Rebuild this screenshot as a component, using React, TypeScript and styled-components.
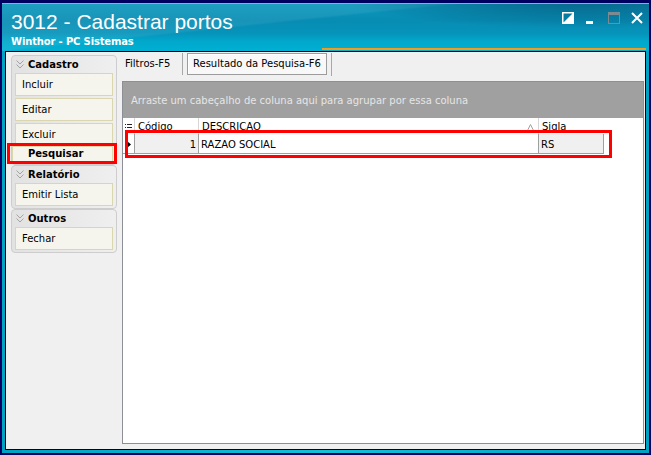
import { createGlobalStyle, styled } from "styled-components";

const GlobalStyle = createGlobalStyle`
  html, body {
    margin: 0;
    padding: 0;
    background: #000060;
  }
  body {
    font-family: "DejaVu Sans", Tahoma, sans-serif;
    font-size: 10px;
    color: #000;
  }
  *, *::before, *::after {
    box-sizing: border-box;
  }
`;

const Window = styled.div`
  width: 651px;
  height: 455px;
  display: flex;
  flex-direction: column;
  border: 2px solid #000060;
  border-top-width: 3px;
  background: linear-gradient(90deg, #00a2c4, #12c0d8 50%, #00a2c4);
`;

const TitleBar = styled.div`
  height: 48px;
  flex-shrink: 0;
  display: flex;
  justify-content: space-between;
  padding: 6px 6px 0 9px;
  border-top: 1px solid #46cfe3;
  color: #fff;
  background:
    linear-gradient(#f59b1c, #f59b1c) right 3px bottom 1px / 324px 2px no-repeat,
    radial-gradient(ellipse 55% 95% at 90% -15%, rgba(0, 55, 90, 0.6), rgba(0, 55, 90, 0) 70%),
    linear-gradient(174deg, rgba(255, 255, 255, 0.07) 0 40%, rgba(255, 255, 255, 0) 42%),
    linear-gradient(180deg, #0c98bd 0%, #078cb3 35%, #0693ba 62%, #00a8cc 80%, #00b0d2 100%);
`;

const TitleBlock = styled.div`
  display: flex;
  flex-direction: column;
`;

const Title = styled.div`
  font-family: "Liberation Sans", Arial, sans-serif;
  font-size: 21px;
  line-height: 24px;
`;

const Subtitle = styled.div`
  margin-top: 1px;
  font-weight: bold;
  font-size: 10px;
  line-height: 13px;
  letter-spacing: -0.15px;
`;

const Controls = styled.div`
  margin-top: 2px;
  display: flex;
  gap: 11px;
  height: 12px;
`;

const Content = styled.div`
  flex: 1;
  margin: 0 3px 3px;
  border: 1px solid #000;
  background: #f0f0f0;
  display: flex;
  min-height: 0;
`;

const Sidebar = styled.div`
  width: 116px;
  flex-shrink: 0;
  padding: 3px 0 0 5px;
  display: flex;
  flex-direction: column;
`;

const Group = styled.div`
  width: 106px;
  flex-shrink: 0;
  border: 1px solid #cdcdcd;
  border-radius: 4px;
  background: linear-gradient(90deg, #e2e2e2, #efefef);
  padding: 0 3px 2px;
  display: flex;
  flex-direction: column;
`;

const GroupHeader = styled.div`
  height: 17px;
  flex-shrink: 0;
  padding: 0 0 1px 1px;
  display: flex;
  align-items: center;
  gap: 4px;
  font-weight: bold;
`;

const ButtonList = styled.div`
  display: flex;
  flex-direction: column;
  gap: 2px;
`;

const ActionButton = styled.div<{ $active?: boolean }>`
  position: relative;
  flex-shrink: 0;
  height: ${(p) => (p.$active ? "16px" : "23px")};
  margin: ${(p) => (p.$active ? "-2px 0 0 -3px" : "0")};
  padding-left: ${(p) => (p.$active ? "15px" : "6px")};
  border: 1px solid #dad6ae;
  background: #f6f5ed;
  line-height: ${(p) => (p.$active ? "14px" : "21px")};
  font-weight: ${(p) => (p.$active ? "bold" : "normal")};

  ${(p) =>
    p.$active &&
    `
    &::after {
      content: "";
      position: absolute;
      top: -4px;
      left: -6px;
      right: -5px;
      bottom: -3px;
      border: 3px solid #ff0000;
    }
  `}
`;

const Main = styled.div`
  flex: 1;
  min-width: 0;
  display: flex;
  flex-direction: column;
  padding: 0 1px 5px 0;
`;

const TabStrip = styled.div`
  height: 24px;
  flex-shrink: 0;
  display: flex;
  padding-top: 1px;
`;

const Tab = styled.div`
  width: 61px;
  height: 22px;
  padding-left: 3px;
  border-right: 1px solid #a8a8a8;
  line-height: 22px;
`;

const ActiveTabSlot = styled.div`
  padding: 0 4px;
  border-right: 1px solid #a8a8a8;
`;

const ActiveTab = styled.div`
  height: 22px;
  padding: 0 5px;
  border: 1px solid #9c9c9c;
  box-shadow: inset 1px 1px 0 #ffffff;
  background: #f8f8f8;
  line-height: 20px;
`;

const GridPanel = styled.div`
  position: relative;
  flex: 1;
  margin-top: 5px;
  border: 1px solid #8d8f96;
  background: #fff;
  display: flex;
  flex-direction: column;
`;

const GroupByBand = styled.div`
  height: 36px;
  padding-left: 8px;
  background: #a0a0a0;
  color: #e6e6e6;
  line-height: 37px;
`;

const columns = "12px 64px 340px 65px 1fr";

const HeaderRow = styled.div`
  display: grid;
  grid-template-columns: ${columns};
  height: 16px;
`;

const HeaderCell = styled.div<{ $last?: boolean }>`
  display: flex;
  align-items: center;
  justify-content: space-between;
  padding: 1px 4px 0 3px;
  border-right: ${(p) => (p.$last ? "none" : "1px solid #d6d6d6")};
  line-height: 16px;
  white-space: nowrap;
`;

const IndicatorHeader = styled.div`
  padding: 4px 0 0 2px;
  border-right: 1px solid #d6d6d6;
`;

const DataRow = styled.div`
  display: grid;
  grid-template-columns: ${columns};
  height: 20px;
`;

const DataCell = styled.div<{ $shaded?: boolean; $right?: boolean; $edge?: boolean }>`
  padding: 2px ${(p) => (p.$right ? "2px" : "3px")} 0 ${(p) => (p.$right ? "0" : "2px")};
  border-bottom: 1px solid #a0a0a0;
  border-right: ${(p) => (p.$edge ? "1px solid #a0a0a0" : "none")};
  background: ${(p) => (p.$shaded ? "#f0f0f0" : "#fff")};
  text-align: ${(p) => (p.$right ? "right" : "left")};
  line-height: 17px;
  white-space: nowrap;
`;

const RowIndicator = styled.div`
  display: flex;
  align-items: center;
  padding: 1px 0 0 4px;
  border-right: 1px solid #a0a0a0;
  border-bottom: 1px solid #a0a0a0;
`;

const RowHighlight = styled.div`
  position: absolute;
  left: 2px;
  top: 48px;
  width: 487px;
  height: 28px;
  border: 3px solid #ff0000;
  pointer-events: none;
`;

const RestoreIcon = () => (
  <svg width="12" height="12" viewBox="0 0 12 12">
    <rect x="0.75" y="0.75" width="10.5" height="10.5" fill="none" stroke="#fff" strokeWidth="1.5" />
    <polygon points="11,1 11,11 1,11" fill="#fff" />
  </svg>
);

const MinimizeIcon = () => (
  <svg width="12" height="12" viewBox="0 0 12 12">
    <rect x="1" y="9" width="7" height="3" fill="#fff" />
  </svg>
);

const MaximizeIcon = () => (
  <svg width="12" height="12" viewBox="0 0 12 12">
    <rect x="0.5" y="0.5" width="11" height="11" fill="none" stroke="#7d8a92" />
    <rect x="0" y="0" width="12" height="3" fill="#7d8a92" />
  </svg>
);

const CloseIcon = () => (
  <svg width="12" height="12" viewBox="0 0 12 12">
    <path d="M1 1 L11 11 M11 1 L1 11" stroke="#fff" strokeWidth="2" />
  </svg>
);

const Chevrons = () => (
  <svg width="8" height="9" viewBox="0 0 8 9">
    <path d="M0.5 0.5 L4 4 L7.5 0.5 M0.5 4.5 L4 8 L7.5 4.5" fill="none" stroke="#a4a4a4" strokeWidth="1" />
  </svg>
);

const ColumnsIcon = () => (
  <svg width="7" height="7" viewBox="0 0 7 7">
    <path d="M0 0.5 H1 M2 0.5 H7 M0 3.5 H1 M2 3.5 H7 M0 6.5 H1 M2 6.5 H7" stroke="#222" strokeWidth="1" />
  </svg>
);

const SortUp = () => (
  <svg width="7" height="7" viewBox="0 0 7 7">
    <path d="M3.5 0.5 L6.5 6.5 H0.5 Z" fill="none" stroke="#a0a0a0" strokeWidth="1" />
  </svg>
);

const RowArrow = () => (
  <svg width="4" height="7" viewBox="0 0 4 7">
    <polygon points="0,0 4,3.5 0,7" fill="#000" />
  </svg>
);

type MenuGroup = { title: string; items: { label: string; active?: boolean }[] };

const menu: MenuGroup[] = [
  {
    title: "Cadastro",
    items: [{ label: "Incluir" }, { label: "Editar" }, { label: "Excluir" }, { label: "Pesquisar", active: true }],
  },
  { title: "Relatório", items: [{ label: "Emitir Lista" }] },
  { title: "Outros", items: [{ label: "Fechar" }] },
];

const rows = [{ codigo: "1", descricao: "RAZAO SOCIAL", sigla: "RS" }];

const App = () => {
  return (
    <>
      <GlobalStyle />
      <Window>
        <TitleBar>
          <TitleBlock>
            <Title>3012 - Cadastrar portos</Title>
            <Subtitle>Winthor - PC Sistemas</Subtitle>
          </TitleBlock>
          <Controls>
            <RestoreIcon />
            <MinimizeIcon />
            <MaximizeIcon />
            <CloseIcon />
          </Controls>
        </TitleBar>
        <Content>
          <Sidebar>
            {menu.map((group) => (
              <Group key={group.title}>
                <GroupHeader>
                  <Chevrons />
                  {group.title}
                </GroupHeader>
                <ButtonList>
                  {group.items.map((item) => (
                    <ActionButton key={item.label} $active={item.active}>
                      {item.label}
                    </ActionButton>
                  ))}
                </ButtonList>
              </Group>
            ))}
          </Sidebar>
          <Main>
            <TabStrip>
              <Tab>Filtros-F5</Tab>
              <ActiveTabSlot>
                <ActiveTab>Resultado da Pesquisa-F6</ActiveTab>
              </ActiveTabSlot>
            </TabStrip>
            <GridPanel>
              <GroupByBand>Arraste um cabeçalho de coluna aqui para agrupar por essa coluna</GroupByBand>
              <HeaderRow>
                <IndicatorHeader>
                  <ColumnsIcon />
                </IndicatorHeader>
                <HeaderCell>Código</HeaderCell>
                <HeaderCell>
                  DESCRICAO
                  <SortUp />
                </HeaderCell>
                <HeaderCell $last>Sigla</HeaderCell>
              </HeaderRow>
              {rows.map((row) => (
                <DataRow key={row.codigo}>
                  <RowIndicator>
                    <RowArrow />
                  </RowIndicator>
                  <DataCell $shaded $right $edge>
                    {row.codigo}
                  </DataCell>
                  <DataCell $edge>{row.descricao}</DataCell>
                  <DataCell $shaded $edge>
                    {row.sigla}
                  </DataCell>
                </DataRow>
              ))}
              <RowHighlight />
            </GridPanel>
          </Main>
        </Content>
      </Window>
    </>
  );
};

export default App;
